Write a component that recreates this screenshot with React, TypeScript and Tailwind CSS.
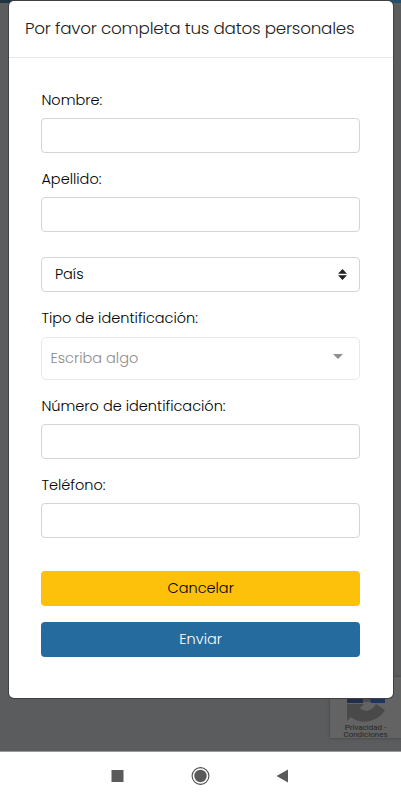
import { useState } from 'react';
import type { ReactNode } from 'react';

const Field = ({ label, gap = 'mb-[7px]', children }: { label: string; gap?: string; children: ReactNode }) => (
  <div>
    <label className={`block w-max h-[22px] text-[14.5px] leading-[22px] text-black ${gap}`}>{label}</label>
    {children}
  </div>
);

const TextInput = ({ label }: { label: string }) => {
  const [value, setValue] = useState('');
  return (
    <input
      aria-label={label}
      value={value}
      onChange={e => setValue(e.target.value)}
      className="block w-full h-[35px] px-3 rounded-[4px] border border-[#d3d4d6] bg-white outline-none"
    />
  );
};

const RecaptchaBadge = () => (
  <div className="absolute left-[330px] top-[677px] w-[71px] h-[61px] bg-[#636363] shadow-[0_0_3px_#404040] flex flex-col items-center">
    <svg width="40" height="46" viewBox="0 0 40 46" className="shrink-0">
      <path d="M1 19h16v7H1z" fill="#202e4b" />
      <path d="M23 19h16v7H25z" fill="#1d355f" />
      <path d="M17 20h6l2 5h-8z" fill="#4c4c4c" />
      <path d="M1 27v17l4-4c9 8 26 6 34-7l-9-6c-4 7-11 9-16 4l4-4z" fill="#494949" />
    </svg>
    <div
      className="flex flex-col items-center text-[8px] leading-[7px] text-[#262626] font-normal mt-[1px]"
      style={{ fontFamily: 'Roboto, sans-serif' }}
    >
      <span>Privacidad -</span>
      <span>Condiciones</span>
    </div>
  </div>
);

const NavBar = () => (
  <nav className="h-[49px] shrink-0 bg-white border-t border-[#999]">
    <svg width="401" height="48" viewBox="0 0 401 48" fill="#5a5a5a">
      <rect x="111.5" y="18" width="12" height="12" />
      <circle cx="200.5" cy="24" r="8.4" fill="none" stroke="#4e4e4e" strokeWidth="1.1" />
      <circle cx="200.5" cy="24" r="6.2" />
      <path d="M276.5 24L288 17.5v13z" />
    </svg>
  </nav>
);

export default function App() {
  return (
    <div className="relative flex flex-col w-[401px] h-[800px] overflow-hidden bg-[#5b5c5e] text-[#111] font-light font-[Poppins,Inter,sans-serif]">
      <div className="h-[3px] shrink-0 bg-gradient-to-r from-[#203440] to-[#234f6d]" />
      <div className="flex-1" />
      <RecaptchaBadge />
      <NavBar />

      {/* Modal */}
      <div className="absolute left-[9px] top-[1px] w-[383.5px] h-[696.5px] rounded-[5px] bg-white shadow-[0_0_0_1px_#404040]">
        <header className="h-[57px] border-b border-[#e6e7e8] pl-[16px] pt-[14px]">
          <h1 className="w-max text-[16.8px] leading-[27px] tracking-[-0.23px] text-[#222]">
            Por favor completa tus datos personales
          </h1>
        </header>

        <form className="pl-[32.4px] pr-[32.5px] pt-[31px]" onSubmit={e => e.preventDefault()}>
          <div className="flex flex-col gap-[15px]">
            <Field label="Nombre:">
              <TextInput label="Nombre" />
            </Field>
            <Field label="Apellido:">
              <TextInput label="Apellido" />
            </Field>
          </div>

          <button
            type="button"
            className="mt-[25px] flex items-center justify-between w-full h-[35px] pl-[12.5px] pr-[12px] rounded-[4px] border border-[#d3d4d6] text-[14.5px] text-black"
          >
            País
            <svg width="9" height="11" viewBox="0 0 9 11" fill="#222">
              <path d="M0 4.7L4.5 0 9 4.7zM0 6.3h9L4.5 11z" />
            </svg>
          </button>

          <div className="mt-[15px] flex flex-col gap-[15px]">
            <Field label="Tipo de identificación:" gap="mb-[8px]">
              <button
                type="button"
                className="flex items-center justify-between w-full h-[43px] pl-[8px] pr-[16px] rounded-[5px] border border-[#e8e8e8] text-[14.5px] text-[#8c8c8c]"
              >
                Escriba algo
                <svg width="10" height="5" viewBox="0 0 10 5" fill="#909090" className="-mt-[4px]">
                  <path d="M0 0h10L5 5z" />
                </svg>
              </button>
            </Field>
            <Field label="Número de identificación:">
              <TextInput label="Número de identificación" />
            </Field>
            <Field label="Teléfono:">
              <TextInput label="Teléfono" />
            </Field>
          </div>

          <div className="mt-[33px] flex flex-col gap-[16px]">
            <button type="button" className="h-[35px] rounded-[4px] bg-[#fdc10b] text-[14.5px] text-black">
              Cancelar
            </button>
            <button type="submit" className="h-[35px] rounded-[4px] bg-[#256b9e] text-[14.5px] text-white">
              Enviar
            </button>
          </div>
        </form>
      </div>
    </div>
  );
}
